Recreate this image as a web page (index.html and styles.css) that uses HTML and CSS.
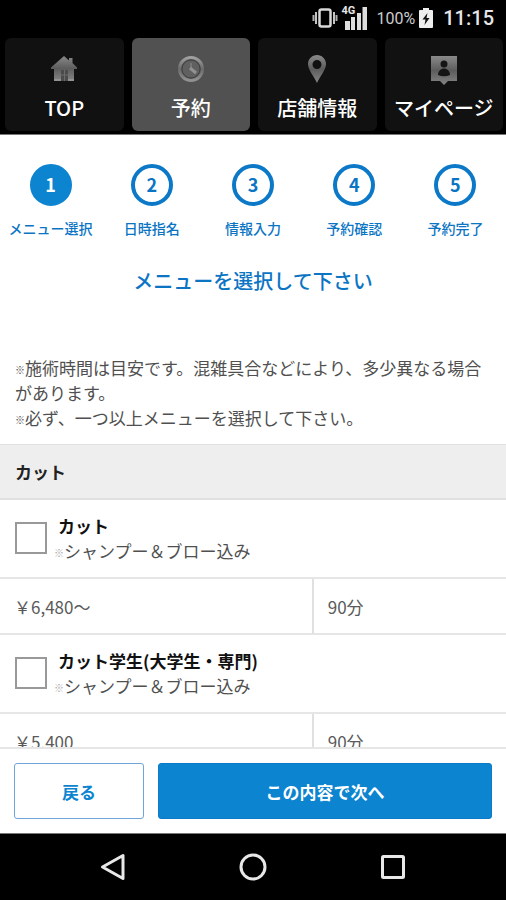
FILE: index.html
```html
<!DOCTYPE html>
<html lang="ja">
<head>
<meta charset="utf-8">
<meta name="viewport" content="width=device-width, initial-scale=1">
<title>予約</title>
<link rel="stylesheet" href="styles.css">
</head>
<body>
<div class="screen">
  <div class="status">
    <svg class="vibrate" width="26" height="20" viewBox="0 0 26 20" aria-hidden="true">
      <rect x="7.500" y="1.500" width="11" height="17" rx="2" fill="none" stroke="#d8d8d8" stroke-width="2.500"/>
      <path d="M4 4v12M22 4v12" stroke="#c4c4c4" stroke-width="2"/>
      <path d="M1.500 7v6M24.500 7v6" stroke="#b0b0b0" stroke-width="2"/>
    </svg>
    <span class="signal">
      <span class="network">4G</span>
      <svg width="24" height="23" viewBox="0 0 24 23" aria-hidden="true">
        <path d="M2 14h5v9H2zM8 10h4v13H8zM14 6h4v17h-4zM19.500 0h4.500v23h-4.500z" fill="#dedede"/>
      </svg>
    </span>
    <span class="percent">100%</span>
    <svg class="battery" width="14" height="20" viewBox="0 0 14 20" aria-hidden="true">
      <path d="M4 0h6v2h3q1 0 1 1v16q0 1-1 1H1q-1 0-1-1V3q0-1 1-1h3z" fill="#eee"/>
      <path d="M8.500 5 3.500 11.500h3L5.500 17l5-7h-3z" fill="#111"/>
    </svg>
    <span class="clock">11:15</span>
  </div>

  <nav class="tabs">
    <a class="tab" href="#top">
      <svg width="28" height="28" viewBox="0 0 28 28" aria-hidden="true">
        <defs><linearGradient id="metal" x1="0" y1="0" x2="0" y2="1"><stop offset="0" stop-color="#8a8a8a"/><stop offset=".5" stop-color="#5c5c5c"/><stop offset="1" stop-color="#858585"/></linearGradient></defs>
        <path d="M14 1 1 12.500v1.500h3v12h20V14h3v-1.500L22.500 8V3H19v2.500z" fill="url(#metal)"/>
        <path d="M11 15h7v11h-7z" fill="#4b4b4b"/>
        <path d="M14.500 15v11M11 20h7" stroke="#6c6c6c"/>
        <path d="M4 25h7M18 25h6" stroke="#929292" stroke-width="2"/>
      </svg>
      <span>TOP</span>
    </a>
    <a class="tab active" href="#reserve">
      <svg width="28" height="28" viewBox="0 0 28 28" aria-hidden="true">
        <defs><linearGradient id="rim" x1="0" y1="0" x2="0" y2="1"><stop offset="0" stop-color="#a0a0a0"/><stop offset=".5" stop-color="#6b6b6b"/><stop offset="1" stop-color="#919191"/></linearGradient></defs>
        <circle cx="14" cy="14" r="11.500" fill="#555" stroke="url(#rim)" stroke-width="3"/>
        <circle cx="14" cy="14" r="9" fill="#606060" stroke="#424242" stroke-width="1"/>
        <path d="M14 8v6" fill="none" stroke="#777" stroke-width="2"/>
        <path d="M13 13l6 5" fill="none" stroke="#929292" stroke-width="3"/>
      </svg>
      <span>予約</span>
    </a>
    <a class="tab" href="#shop">
      <svg width="28" height="28" viewBox="0 0 28 28" aria-hidden="true">
        <path fill-rule="evenodd" d="M14 0c-5 0-9 4-9 9 0 6 6 12 9 19 3-7 9-13 9-19 0-5-4-9-9-9zm0 5a4.500 4.500 0 1 1 0 9 4.500 4.500 0 0 1 0-9z" fill="url(#metal)"/>
      </svg>
      <span>店舗情報</span>
    </a>
    <a class="tab" href="#mypage">
      <svg width="28" height="30" viewBox="0 0 28 30" aria-hidden="true">
        <path d="M1 1h26v25H18l-4 4-4-4H1z" fill="url(#metal)"/>
        <circle cx="14" cy="9" r="3.500" fill="#151515"/>
        <path d="M8 20c0-4 3-6.500 6-6.500s6 2.500 6 6.500q-6 2.500-12 0z" fill="#151515"/>
      </svg>
      <span>マイページ</span>
    </a>
  </nav>

  <main class="content">
    <ol class="steps">
      <li class="current"><b>1</b><span>メニュー選択</span></li>
      <li><b>2</b><span>日時指名</span></li>
      <li><b>3</b><span>情報入力</span></li>
      <li><b>4</b><span>予約確認</span></li>
      <li><b>5</b><span>予約完了</span></li>
    </ol>
    <h1>メニューを選択して下さい</h1>
    <p class="notes"><span class="mark">※</span>施術時間は目安です。混雑具合などにより、多少異なる場合があります。<br><span class="mark">※</span>必ず、一つ以上メニューを選択して下さい。</p>
    <h2>カット</h2>
    <table class="menu">
      <colgroup><col class="wide"><col></colgroup>
      <tbody>
        <tr>
          <td class="item" colspan="2">
            <div class="choice">
              <input type="checkbox" id="cut">
              <label for="cut"><strong>カット</strong><span class="detail"><span class="mark">※</span>シャンプー＆ブロー込み</span></label>
            </div>
          </td>
        </tr>
        <tr><td class="price">￥6,480～</td><td class="time">90分</td></tr>
      </tbody>
      <tbody>
        <tr>
          <td class="item" colspan="2">
            <div class="choice">
              <input type="checkbox" id="student">
              <label for="student"><strong>カット学生(大学生・専門)</strong><span class="detail"><span class="mark">※</span>シャンプー＆ブロー込み</span></label>
            </div>
          </td>
        </tr>
        <tr><td class="price">￥5,400</td><td class="time">90分</td></tr>
      </tbody>
    </table>
  </main>

  <footer class="actions">
    <button class="back" type="button">戻る</button>
    <button class="next" type="button">この内容で次へ</button>
  </footer>

  <div class="system">
    <button type="button" aria-label="戻る"><svg width="28" height="28" viewBox="0 0 28 28"><path d="M24 2.500v23L3.500 14z" fill="none" stroke="#e8e8e8" stroke-width="3" stroke-linejoin="round"/></svg></button>
    <button type="button" aria-label="ホーム"><svg width="28" height="28" viewBox="0 0 28 28"><circle cx="14" cy="14" r="12" fill="none" stroke="#e8e8e8" stroke-width="3"/></svg></button>
    <button type="button" aria-label="アプリ一覧"><svg width="28" height="28" viewBox="0 0 28 28"><rect x="3.500" y="3.500" width="21" height="21" rx="1" fill="none" stroke="#e8e8e8" stroke-width="3"/></svg></button>
  </div>
</div>
</body>
</html>
```
FILE: styles.css
```css
* {
  box-sizing: border-box;
}

body {
  margin: 0;
  font-family: "Noto Sans CJK JP", sans-serif;
  font-size: 17px;
  line-height: 25px;
  color: #505050;
  background: #fff;
}

button {
  font: inherit;
  cursor: pointer;
}

.screen {
  display: flex;
  flex-direction: column;
  height: 100vh;
}

/* Status bar */
.status {
  display: flex;
  flex: none;
  align-items: center;
  justify-content: flex-end;
  height: 38px;
  padding: 2px 12px 4px;
  background: #000;
  color: #e6e6e6;
  font-family: Roboto, sans-serif;
}

.signal {
  position: relative;
  display: flex;
  margin: 0 10px 0 5px;
}

.network {
  position: absolute;
  top: -2px;
  left: -1px;
  font-size: 11px;
  font-weight: 700;
  line-height: 12px;
  text-shadow: 0 0 1px #000, 1px 1px 1px #000;
}

.percent {
  color: #ccc;
  font-size: 16px;
}

.battery {
  margin: 0 10px 0 4px;
}

.clock {
  font-size: 20px;
  font-weight: 500;
}

/* Main tabs */
.tabs {
  display: grid;
  flex: none;
  grid-template-columns: repeat(4, 1fr);
  gap: 8px;
  padding: 0 3px 3px 5px;
  background: #000;
  border-bottom: 1px solid #777;
}

.tab {
  display: flex;
  flex-direction: column;
  align-items: center;
  justify-content: space-between;
  height: 93px;
  padding: 17px 0 8px;
  border-radius: 6px;
  background: #111;
  color: #fff;
  font-size: 20px;
  font-weight: 500;
  line-height: 30px;
  text-decoration: none;
  white-space: nowrap;
}

.tab.active {
  background: #515151;
}

/* Booking steps */
.content {
  flex: 1;
  min-height: 0;
  overflow: hidden;
}

.steps {
  display: grid;
  grid-template-columns: repeat(5, 1fr);
  margin: 0;
  padding: 29px 0 0;
  list-style: none;
  color: #0b75c4;
}

.steps li {
  display: flex;
  flex-direction: column;
  align-items: center;
  gap: 12px;
  font-size: 14px;
  font-weight: 500;
  line-height: 20px;
  white-space: nowrap;
}

.steps b {
  width: 42px;
  height: 42px;
  border: 4px solid #0b78c8;
  border-radius: 50%;
  font-size: 18px;
  line-height: 32px;
  text-align: center;
}

.steps .current b {
  border-color: #0c84d0;
  background: #0c84d0;
  color: #fff;
}

h1 {
  margin: 28px 0 0;
  color: #0b75c4;
  font-size: 20px;
  font-weight: 500;
  line-height: 30px;
  text-align: center;
}

.notes {
  margin: 0;
  padding: 59px 15px 14px;
}

.mark {
  font-size: 10px;
  line-height: 12px;
  vertical-align: middle;
}

h2 {
  margin: 0;
  padding: 14px 15px;
  border-top: 1px solid #e0e0e0;
  border-bottom: 2px solid #e0e0e0;
  background: #eee;
  color: #222;
  font-size: 17px;
  font-weight: 700;
  line-height: 25px;
}

/* Menu list */
.menu {
  width: 100%;
  border-collapse: separate;
  border-spacing: 0;
  table-layout: fixed;
}

.menu .wide {
  width: 62%;
}

.menu td {
  border-bottom: 2px solid #e6e6e6;
}

.menu .item {
  padding: 13px 15px 14px;
}

.choice {
  display: flex;
  align-items: center;
  gap: 7px;
}

.choice input {
  flex: none;
  width: 32px;
  height: 32px;
  margin: 0;
  appearance: none;
  border: 2px solid #999;
  background: #fff;
}

.choice input:checked {
  background: #0c84d0;
}

.choice strong {
  display: block;
  padding-left: 4px;
  color: #111;
  font-weight: 700;
}

.detail {
  display: block;
}

.detail .mark {
  color: #aaa;
}

.menu .price,
.menu .time {
  height: 56px;
  padding: 0 14px;
  color: #5a5a5a;
}

.menu .price {
  border-right: 2px solid #e0e0e0;
}

/* Bottom actions */
.actions {
  display: grid;
  flex: none;
  grid-template-columns: 130fr 334fr;
  gap: 14px;
  padding: 14px;
  border-top: 2px solid #e6e6e6;
  border-bottom: 1px solid #777;
  background: #fff;
}

.actions button {
  height: 56px;
  padding: 0;
  border-radius: 3px;
  font-weight: 700;
}

.back {
  border: 1px solid #6ea6da;
  background: #fff;
  color: #0c84d0;
}

.next {
  border: 1px solid #0c7cc8;
  background: #0c84d0;
  color: #fff;
}

/* System navigation */
.system {
  display: flex;
  flex: none;
  align-items: center;
  justify-content: center;
  gap: 112px;
  height: 66px;
  background: #000;
}

.system button {
  display: flex;
  padding: 0;
  border: 0;
  background: none;
}
```
